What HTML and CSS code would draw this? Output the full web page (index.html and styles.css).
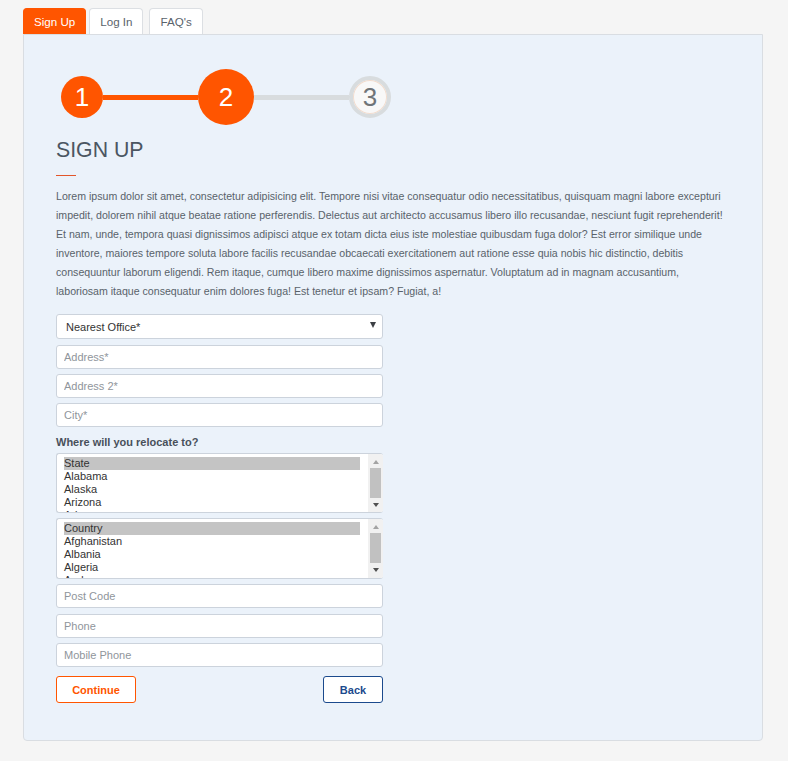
FILE: index.html
```html
<!DOCTYPE html>
<html>
<head>
<meta charset="utf-8">
<link rel="stylesheet" href="styles.css">
</head>
<body>
<div class="wrap">
  <nav class="tabs">
    <a class="tab active">Sign Up</a>
    <a class="tab">Log In</a>
    <a class="tab">FAQ's</a>
  </nav>
  <main class="panel">
    <div class="stepper">
      <div class="step done">1</div>
      <div class="bar on"></div>
      <div class="step current">2</div>
      <div class="bar"></div>
      <div class="step todo">3</div>
    </div>
    <h1 class="title">SIGN UP</h1>
    <div class="rule"></div>
    <p class="intro">Lorem ipsum dolor sit amet, consectetur adipisicing elit. Tempore nisi vitae consequatur odio necessitatibus, quisquam magni labore excepturi impedit, dolorem nihil atque beatae ratione perferendis. Delectus aut architecto accusamus libero illo recusandae, nesciunt fugit reprehenderit! Et nam, unde, tempora quasi dignissimos adipisci atque ex totam dicta eius iste molestiae quibusdam fuga dolor? Est error similique unde inventore, maiores tempore soluta labore facilis recusandae obcaecati exercitationem aut ratione esse quia nobis hic distinctio, debitis consequuntur laborum eligendi. Rem itaque, cumque libero maxime dignissimos aspernatur. Voluptatum ad in magnam accusantium, laboriosam itaque consequatur enim dolores fuga! Est tenetur et ipsam? Fugiat, a!</p>
    <form class="form">
      <div class="dropdown"><span>Nearest Office*</span><span class="caret"></span></div>
      <input class="field first" placeholder="Address*">
      <input class="field" placeholder="Address 2*">
      <input class="field" placeholder="City*">
      <label class="label">Where will you relocate to?</label>
      <div class="listbox">
        <ul class="options">
          <li class="sel">State</li>
          <li>Alabama</li>
          <li>Alaska</li>
          <li>Arizona</li>
          <li>Arkansas</li>
        </ul>
        <div class="scroll"><span class="up"></span><span class="thumb"></span><span class="down"></span></div>
      </div>
      <div class="listbox second">
        <ul class="options">
          <li class="sel">Country</li>
          <li>Afghanistan</li>
          <li>Albania</li>
          <li>Algeria</li>
          <li>Andorra</li>
        </ul>
        <div class="scroll"><span class="up"></span><span class="thumb"></span><span class="down"></span></div>
      </div>
      <input class="field after" placeholder="Post Code">
      <input class="field phone" placeholder="Phone">
      <input class="field" placeholder="Mobile Phone">
      <div class="actions">
        <button type="button" class="btn primary">Continue</button>
        <button type="button" class="btn back">Back</button>
      </div>
    </form>
  </main>
</div>
</body>
</html>
```

FILE: styles.css
```css
* { box-sizing: border-box; }
html, body { margin: 0; padding: 0; }
body {
  background: #f5f5f5;
  font-family: "Liberation Sans", Arial, sans-serif;
  color: #555e66;
}
.wrap {
  padding: 8px 25px 20px 23px;
}
.tabs {
  display: flex;
  gap: 3px;
  height: 26px;
}
.tab {
  display: flex;
  align-items: center;
  padding: 0 10px 0 10px;
  font-size: 11.6px;
  color: #5a636b;
  background: #fff;
  border: 1px solid #dcdfe3;
  border-bottom: none;
  border-radius: 4px 4px 0 0;
  height: 26px;
}
.tab + .tab + .tab { margin-left: 3px; }
.tab.active {
  background: #ff5500;
  border-color: #ff5500;
  color: #fff;
}
.panel {
  background: #ebf2fa;
  border: 1px solid #d9dde2;
  border-radius: 0 0 4px 4px;
  padding: 34px 32px 37px 32px;
}
.stepper {
  display: flex;
  align-items: center;
  margin-left: 5px;
  height: 56px;
}
.step {
  border-radius: 50%;
  display: flex;
  align-items: center;
  justify-content: center;
  font-size: 26px;
  flex: none;
}
.step.done {
  width: 42px; height: 42px;
  background: #ff5500;
  color: #fff;
}
.step.current {
  width: 56px; height: 56px;
  background: #ff5500;
  color: #fff;
}
.step.todo {
  width: 42px; height: 42px;
  background: #f8f8f8;
  border: 4px solid #d8dcde;
  box-shadow: inset 0 0 0 1px #f3dccd;
  color: #6f7478;
}
.bar {
  width: 95px;
  height: 5px;
  background: #d8dcde;
}
.bar.on { background: #ff5500; }
.title {
  margin: 12px 0 0;
  font-size: 21.3px;
  font-weight: normal;
  color: #4b5662;
  line-height: 26px;
}
.rule {
  width: 20px;
  height: 1px;
  background: #e2562a;
  margin-top: 12px;
}
.intro {
  margin: 11px 0 0;
  font-size: 10.6px;
  line-height: 19px;
  color: #59626a;
  max-width: 676px;
}
.form {
  width: 327px;
  margin-top: 13px;
  display: flex;
  flex-direction: column;
}
.dropdown {
  height: 25px;
  background: #fff;
  border: 1px solid #ccd3dc;
  border-radius: 3px;
  display: flex;
  align-items: center;
  justify-content: space-between;
  padding: 0 6px 0 9px;
  font-size: 11px;
  color: #333;
}
.caret {
  width: 0;
  height: 0;
  border-left: 3px solid transparent;
  border-right: 3px solid transparent;
  border-top: 6px solid #3c3f44;
  align-self: flex-start;
  margin-top: 7px;
}
.field {
  height: 24px;
  margin-top: 5px;
  background: #fff;
  border: 1px solid #ccd3dc;
  border-radius: 3px;
  padding: 0 7px;
  font-family: "Liberation Sans", Arial, sans-serif;
  font-size: 11px;
  color: #333;
  outline: none;
}
.field.first { margin-top: 6px; }
.field.after { margin-top: 5px; }
.field.phone { margin-top: 6px; }
.field::placeholder { color: #8f959b; }
.label {
  font-size: 11px;
  font-weight: bold;
  color: #48505a;
  margin-top: 9px;
  margin-bottom: 4px;
  line-height: 13px;
}
.listbox {
  height: 60px;
  display: flex;
  background: #fff;
  border: 1px solid #ccd3dc;
  border-right: none;
  border-radius: 3px;
  overflow: hidden;
}
.listbox.second { margin-top: 5px; height: 61px; }
.options {
  flex: 1;
  list-style: none;
  margin: 0;
  padding: 3px 8px 0 7px;
  font-size: 11px;
  line-height: 13px;
  color: #333;
}
.options li { padding-left: 0; white-space: nowrap; }
.options li.sel { background: #c4c4c4; }
.scroll {
  width: 15px;
  flex: none;
  background: #f1f1f1;
  display: flex;
  flex-direction: column;
  align-items: center;
  margin-top: -1px;
  margin-bottom: -1px;
}
.up {
  width: 0; height: 0;
  border-left: 3.5px solid transparent;
  border-right: 3.5px solid transparent;
  border-bottom: 4px solid #a3a3a3;
  margin-top: 7px;
}
.thumb {
  width: 11px;
  height: 30px;
  background: #c1c1c1;
  margin-top: 4px;
}
.down {
  width: 0; height: 0;
  border-left: 3.5px solid transparent;
  border-right: 3.5px solid transparent;
  border-top: 4px solid #505050;
  margin-top: 5px;
}
.actions {
  display: flex;
  justify-content: space-between;
  margin-top: 9px;
}
.btn {
  height: 27px;
  background: #fff;
  border-radius: 3px;
  font-family: "Liberation Sans", Arial, sans-serif;
  font-size: 11px;
  font-weight: bold;
  cursor: pointer;
}
.btn.primary {
  width: 80px;
  border: 1px solid #ff5500;
  color: #ff5500;
}
.btn.back {
  width: 60px;
  border: 1px solid #1b4a8d;
  color: #1b4a8d;
}
```
